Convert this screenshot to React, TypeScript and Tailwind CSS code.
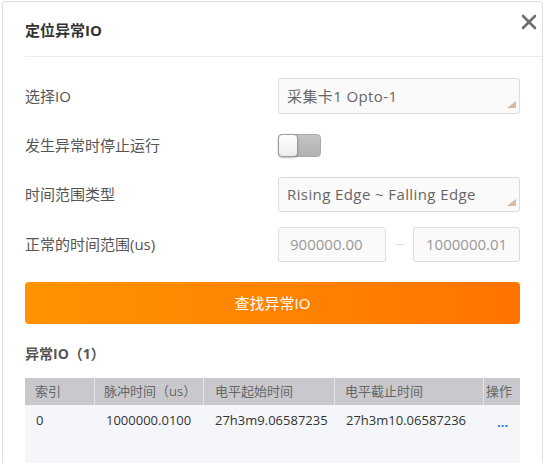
import { X } from "lucide-react";

const font = { fontFamily: '"Open Sans", "Noto Sans CJK SC", sans-serif' };

const columns = [
  { title: "索引", w: "w-[70px]", pl: "pl-[10px]" },
  { title: "脉冲时间（us）", w: "w-[109px]", pl: "pl-[9px]" },
  { title: "电平起始时间", w: "w-[131px]", pl: "pl-[11px]" },
  { title: "电平截止时间", w: "w-[149px]", pl: "pl-[10px]" },
  { title: "操作", w: "w-[60px]", pl: "pl-[2px]" },
];

const rows = [["0", "1000000.0100", "27h3m9.06587235", "27h3m10.06587236"]];

function SelectBox({ value }: { value: string }) {
  return (
    <div className="relative flex-1 h-full rounded-[3px] border border-[#dcdcdc] bg-[#fafafa] pl-[8px] flex items-center text-[15px] tracking-[0.4px] text-[#666]">
      {value}
      <svg className="absolute right-[3px] bottom-[5px]" width="9" height="7" viewBox="0 0 9 7">
        <polygon points="9,0 9,7 0,7" fill="#d8b9a2" />
      </svg>
    </div>
  );
}

function Row({ label, h, mt, children }: { label: string; h: string; mt: string; children: React.ReactNode }) {
  return (
    <div className={`flex items-center ${h} ${mt}`}>
      <div className="w-[253px] text-[15px] text-[#555]">{label}</div>
      <div className="flex-1 flex items-center h-full">{children}</div>
    </div>
  );
}

export default function App() {
  return (
    <div className="w-[545px] h-[463px] bg-white overflow-hidden" style={font}>
      <div className="relative ml-[2px] mt-[1px] w-[541px] h-[480px] bg-white border border-[#dedede] rounded-[4px]">
        {/* Header */}
        <div className="ml-[22px] h-[55px] flex items-center border-b border-[#ececec]">
          <span className="text-[15px] font-bold text-[#333] pt-[2px]">定位异常IO</span>
        </div>
        <X className="absolute top-[8px] right-[1px] text-[#707070]" size={24} strokeWidth={2.6} />

        {/* Form */}
        <div className="px-[22px] pt-[21px]">
          <Row label="选择IO" h="h-[36px]" mt="mt-0">
            <SelectBox value="采集卡1 Opto-1" />
          </Row>
          <Row label="发生异常时停止运行" h="h-[23px]" mt="mt-[20px]">
            <div className="relative w-[43px] h-[23px] rounded-[4px] bg-gradient-to-b from-[#c4c4c4] to-[#b2b2b2] border border-[#aaa]">
              <div className="absolute left-[-1px] top-[-1px] w-[20px] h-[23px] rounded-[4px] bg-gradient-to-b from-white to-[#ececec] border border-[#9a9a9a] shadow-[0_1px_2px_rgba(0,0,0,0.25)]" />
            </div>
          </Row>
          <Row label="时间范围类型" h="h-[35px]" mt="mt-[20px]">
            <SelectBox value="Rising Edge ~ Falling Edge" />
          </Row>
          <Row label="正常的时间范围(us)" h="h-[35px]" mt="mt-[15px]">
            <div className="w-[108px] h-full rounded-[3px] border border-[#dcdcdc] bg-[#fafafa] pl-[11px] flex items-center text-[15px] text-[#999]">
              900000.00
            </div>
            <div className="flex-1 flex justify-center">
              <div className="w-[10px] h-px bg-[#ddd]" />
            </div>
            <div className="w-[107px] h-full rounded-[3px] border border-[#dcdcdc] bg-[#fafafa] pl-[12px] flex items-center text-[15px] text-[#999]">
              1000000.01
            </div>
          </Row>

          <button className="mt-[20px] w-full h-[42px] rounded-[4px] bg-gradient-to-r from-[#ff9300] to-[#ff7300] text-white text-[15px]">
            查找异常IO
          </button>

          <div className="mt-[19px] h-[20px] flex items-center text-[14px] font-bold text-[#555]">异常IO（1）</div>

          {/* Table */}
          <div className="mt-[15px] w-[495px] overflow-hidden">
            <div className="flex h-[27px] bg-[#c9c9cd] text-[13px] text-[#666] whitespace-nowrap">
              {columns.map((c, i) => (
                <div
                  key={c.title}
                  className={`${c.w} ${c.pl} shrink-0 flex items-center ${i < columns.length - 1 ? "border-r border-[#e4e4e6]" : ""}`}
                >
                  {c.title}
                </div>
              ))}
            </div>
            <div className="bg-[#f5f6fa] h-[80px]">
              {rows.map((r) => (
                <div key={r[0]} className="flex h-[32px] text-[13px] text-[#333] whitespace-nowrap">
                  {r.map((cell, i) => (
                    <div key={i} className={`${columns[i].w} shrink-0 flex items-center pl-[11px]`}>
                      {cell}
                    </div>
                  ))}
                  <div className="w-[60px] shrink-0 flex items-center pl-[13px] pt-[3px] text-[#1e7be0] font-bold text-[13px] leading-none">
                    ...
                  </div>
                </div>
              ))}
            </div>
          </div>
        </div>
      </div>
    </div>
  );
}
